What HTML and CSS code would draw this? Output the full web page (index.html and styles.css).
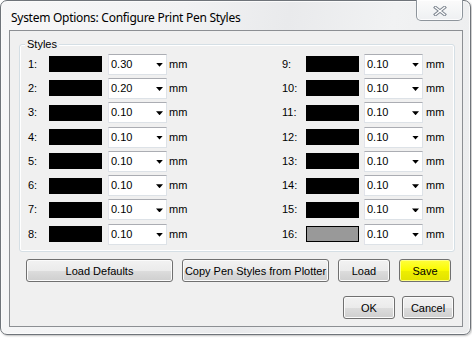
FILE: index.html
```html
<!DOCTYPE html>
<html>
<head>
<meta charset="utf-8">
<link rel="stylesheet" href="styles.css">
</head>
<body>
<div class="window">
  <div class="titlebar">
    <span class="title">System Options: Configure Print Pen Styles</span>
    <div class="close">
      <svg width="14" height="10" viewBox="0 0 14 10">
        <path d="M2.5 1.5 L11.5 8.5 M11.5 1.5 L2.5 8.5" stroke="#7f8791" stroke-width="3.4" stroke-linecap="square" fill="none"/>
        <path d="M2.5 1.5 L11.5 8.5 M11.5 1.5 L2.5 8.5" stroke="#ffffff" stroke-width="1.4" stroke-linecap="square" fill="none"/>
      </svg>
    </div>
  </div>
  <div class="client">
    <fieldset class="group">
      <legend class="legend">Styles</legend>
      <div class="cols">
        <div class="col col-left">
          <div class="row"><span class="lbl">1:</span><span class="swatch"></span><span class="combo"><span class="val">0.30</span><span class="arrow"></span></span><span class="unit">mm</span></div>
          <div class="row"><span class="lbl">2:</span><span class="swatch"></span><span class="combo"><span class="val">0.20</span><span class="arrow"></span></span><span class="unit">mm</span></div>
          <div class="row"><span class="lbl">3:</span><span class="swatch"></span><span class="combo"><span class="val">0.10</span><span class="arrow"></span></span><span class="unit">mm</span></div>
          <div class="row"><span class="lbl">4:</span><span class="swatch"></span><span class="combo"><span class="val">0.10</span><span class="arrow"></span></span><span class="unit">mm</span></div>
          <div class="row"><span class="lbl">5:</span><span class="swatch"></span><span class="combo"><span class="val">0.10</span><span class="arrow"></span></span><span class="unit">mm</span></div>
          <div class="row"><span class="lbl">6:</span><span class="swatch"></span><span class="combo"><span class="val">0.10</span><span class="arrow"></span></span><span class="unit">mm</span></div>
          <div class="row"><span class="lbl">7:</span><span class="swatch"></span><span class="combo"><span class="val">0.10</span><span class="arrow"></span></span><span class="unit">mm</span></div>
          <div class="row"><span class="lbl">8:</span><span class="swatch"></span><span class="combo"><span class="val">0.10</span><span class="arrow"></span></span><span class="unit">mm</span></div>
        </div>
        <div class="col col-right">
          <div class="row"><span class="lbl">9:</span><span class="swatch"></span><span class="combo"><span class="val">0.10</span><span class="arrow"></span></span><span class="unit">mm</span></div>
          <div class="row"><span class="lbl">10:</span><span class="swatch"></span><span class="combo"><span class="val">0.10</span><span class="arrow"></span></span><span class="unit">mm</span></div>
          <div class="row"><span class="lbl">11:</span><span class="swatch"></span><span class="combo"><span class="val">0.10</span><span class="arrow"></span></span><span class="unit">mm</span></div>
          <div class="row"><span class="lbl">12:</span><span class="swatch"></span><span class="combo"><span class="val">0.10</span><span class="arrow"></span></span><span class="unit">mm</span></div>
          <div class="row"><span class="lbl">13:</span><span class="swatch"></span><span class="combo"><span class="val">0.10</span><span class="arrow"></span></span><span class="unit">mm</span></div>
          <div class="row"><span class="lbl">14:</span><span class="swatch"></span><span class="combo"><span class="val">0.10</span><span class="arrow"></span></span><span class="unit">mm</span></div>
          <div class="row"><span class="lbl">15:</span><span class="swatch"></span><span class="combo"><span class="val">0.10</span><span class="arrow"></span></span><span class="unit">mm</span></div>
          <div class="row"><span class="lbl">16:</span><span class="swatch swatch-gray"></span><span class="combo"><span class="val">0.10</span><span class="arrow"></span></span><span class="unit">mm</span></div>
        </div>
      </div>
    </fieldset>
    <div class="actions">
      <button class="btn btn-wide">Load Defaults</button>
      <button class="btn btn-wide">Copy Pen Styles from Plotter</button>
      <button class="btn btn-small">Load</button>
      <button class="btn btn-small btn-yellow">Save</button>
    </div>
    <div class="footer">
      <button class="btn btn-small">OK</button>
      <button class="btn btn-small">Cancel</button>
    </div>
  </div>
</div>
</body>
</html>
```

FILE: styles.css
```css
* { box-sizing: border-box; }
html, body { margin: 0; padding: 0; }
body {
  width: 472px;
  height: 338px;
  background: #ffffff;
  font-family: "Liberation Sans", Arial, sans-serif;
  font-size: 11px;
  color: #000;
  overflow: hidden;
}
.window {
  width: 471px;
  height: 335px;
  border: 1px solid #6f747a;
  border-radius: 7px;
  background: linear-gradient(100deg, #f7f7f8 0%, #f1f2f3 35%, #e9eaec 55%, #f1f2f3 75%, #ebeced 100%);
  box-shadow: inset 0 0 0 1px #fbfbfb, 1px 1px 2px rgba(0,0,0,0.25);
  padding: 0 7px 7px 8px;
  display: flex;
  flex-direction: column;
}
.titlebar {
  height: 29px;
  display: flex;
  align-items: flex-start;
}
.title {
  font-family: "Noto Sans", "Open Sans", sans-serif;
  font-size: 12px;
  line-height: 16px;
  letter-spacing: -0.28px;
  padding: 9px 0 0 2px;
  color: #000;
}
.close {
  margin-left: auto;
  margin-top: -1px;
  width: 47px;
  height: 21px;
  border: 1px solid #8e959c;
  border-top: none;
  border-radius: 0 0 5px 5px;
  background: linear-gradient(#fbfbfb, #eef0f2);
  box-shadow: inset 0 0 0 1px rgba(255,255,255,0.8);
  display: flex;
  align-items: center;
  justify-content: center;
  padding-top: 1px;
}
.close svg { display: block; }
.client {
  height: 297px;
  border: 1px solid #8c8f93;
  background: #f0f0f0;
  display: flex;
  flex-direction: column;
}
.group {
  margin: 7px 7px 0 9px;
  padding: 1px 0 5px 8px;
  border: 1px solid #d5dfe5;
  border-radius: 3px;
  box-shadow: inset 0 0 0 1px #ffffff;
  min-width: 0;
}
.legend {
  padding: 0 2px;
  margin-left: -3px;
  line-height: 13px;
  background: #f0f0f0;
}
.cols {
  display: grid;
  grid-template-columns: 254px auto;
}
.col {
  display: grid;
  grid-auto-rows: 24.3px;
}
.row {
  display: grid;
  align-items: center;
}
.col-left .row { grid-template-columns: 21px 53px 59px auto; column-gap: 0; }
.col-left .combo { margin-left: 6px; }
.col-left .unit { margin-left: 8px; }
.col-right .row { grid-template-columns: 24px 53px 59px auto; }
.col-right .combo { margin-left: 5px; }
.col-right .unit { margin-left: 8px; }
.lbl { line-height: 13px; }
.swatch {
  display: block;
  width: 53px;
  height: 16px;
  background: #000;
  border: 1px solid #000;
}
.swatch-gray { background: #999999; }
.combo {
  display: flex;
  align-items: center;
  width: 59px;
  height: 21px;
  background: #fff;
  border: 1px solid #dde2e7;
  border-top-color: #abadb3;
  border-left-color: #e2e3ea;
  padding: 0 0 0 2px;
}
.val { flex: 1; line-height: 13px; }
.arrow {
  width: 7px;
  height: 4px;
  background: #000;
  clip-path: polygon(0 0, 100% 0, 50% 100%);
  margin-right: 3px;
  margin-top: 1px;
}
.unit { line-height: 13px; }
.actions {
  display: flex;
  gap: 9px;
  margin: 7px 0 0 16px;
}
.footer {
  display: flex;
  justify-content: flex-end;
  gap: 7px;
  margin: 14px 8px 0 0;
}
.btn {
  height: 23px;
  border: 1px solid #707070;
  border-radius: 3px;
  background: linear-gradient(#f2f2f2 0%, #ebebeb 50%, #dddddd 50%, #cfcfcf 100%);
  box-shadow: inset 0 0 0 1px #fbfbfb;
  font-family: "Liberation Sans", Arial, sans-serif;
  font-size: 11px;
  color: #000;
  padding: 0;
  margin: 0;
}
.btn-wide { width: 147px; }
.btn-small { width: 52px; }
.btn-yellow {
  background: linear-gradient(#ffff3c 0%, #fafa00 50%, #eeee00 50%, #e2e200 100%);
  box-shadow: inset 0 0 0 1px #ffff80;
}
```
